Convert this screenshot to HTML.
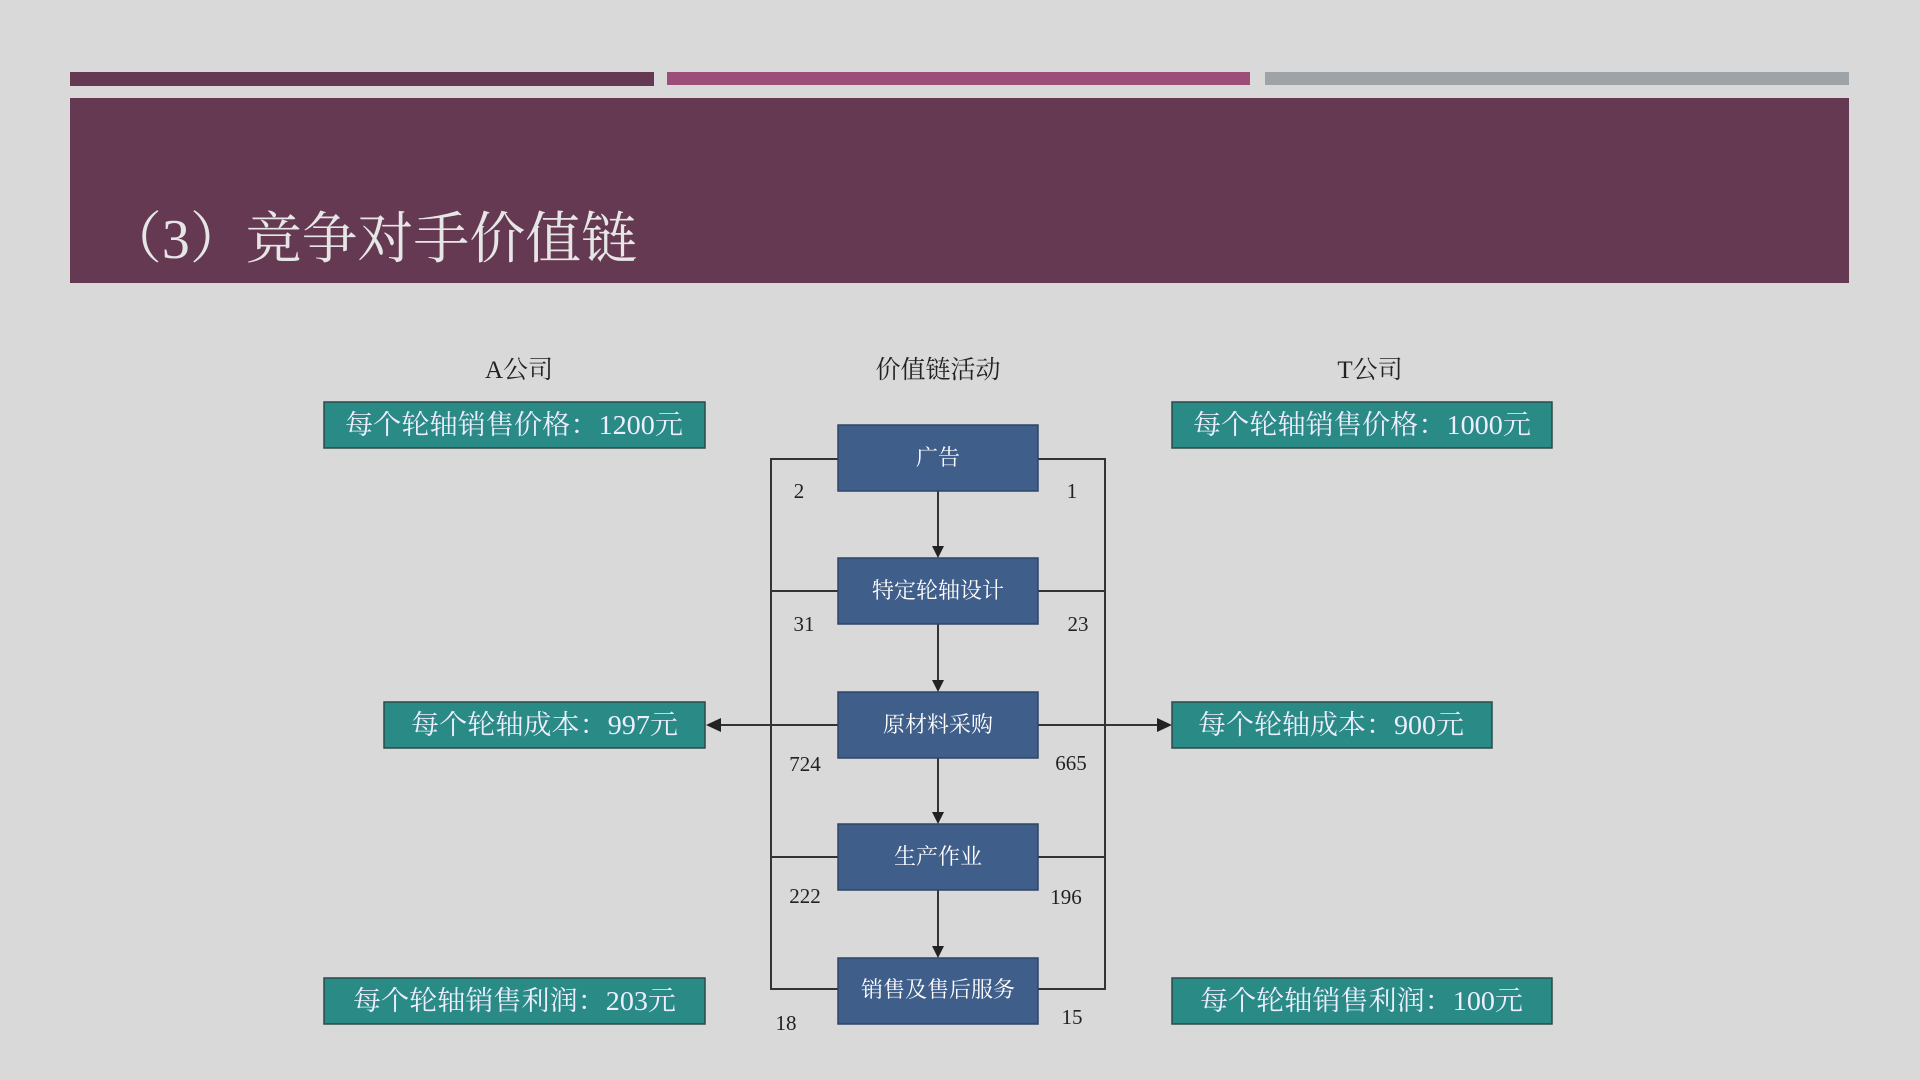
<!DOCTYPE html>
<html><head><meta charset="utf-8"><style>
html,body{margin:0;padding:0;background:#d9d9d9;width:1920px;height:1080px;overflow:hidden}
svg{display:block}
text{font-family:"Liberation Serif","Noto Serif CJK SC",serif}
</style></head><body>
<svg width="1920" height="1080" viewBox="0 0 1920 1080" xmlns="http://www.w3.org/2000/svg">
<rect width="1920" height="1080" fill="#d9d9d9"/>
<rect x="70" y="72" width="584" height="14" fill="#653951"/>
<rect x="667" y="72" width="583" height="13" fill="#9b4f78"/>
<rect x="1265" y="72" width="584" height="13" fill="#9ea3a8"/>
<rect x="70" y="98" width="1779" height="185" fill="#653951"/>
<text x="106" y="258" font-size="56" fill="#e6e6e6" textLength="531" lengthAdjust="spacingAndGlyphs" font-family="Liberation Serif,Noto Serif CJK SC,serif">（3）竞争对手价值链</text>

<g font-size="25" fill="#222" text-anchor="middle">
<text x="519" y="378">A公司</text>
<text x="938" y="378">价值链活动</text>
<text x="1370" y="378">T公司</text>
</g>

<g stroke="#333" stroke-width="2" fill="none">
<polyline points="838,459 771,459 771,989 838,989"/>
<polyline points="1038,459 1105,459 1105,989 1038,989"/>
<line x1="771" y1="591" x2="838" y2="591"/>
<line x1="771" y1="857" x2="838" y2="857"/>
<line x1="1038" y1="591" x2="1105" y2="591"/>
<line x1="1038" y1="857" x2="1105" y2="857"/>
<line x1="838" y1="725" x2="718" y2="725"/>
<line x1="1038" y1="725" x2="1160" y2="725"/>
<line x1="938" y1="491" x2="938" y2="548"/>
<line x1="938" y1="624" x2="938" y2="682"/>
<line x1="938" y1="758" x2="938" y2="814"/>
<line x1="938" y1="890" x2="938" y2="948"/>
</g>
<g fill="#222">
<polygon points="706,725 721,718 721,732"/>
<polygon points="1172,725 1157,718 1157,732"/>
<polygon points="938,558 932,546 944,546"/>
<polygon points="938,692 932,680 944,680"/>
<polygon points="938,824 932,812 944,812"/>
<polygon points="938,958 932,946 944,946"/>
</g>

<g fill="#3f5e8a" stroke="#2f4566" stroke-width="1.5">
<rect x="838" y="425" width="200" height="66"/>
<rect x="838" y="558" width="200" height="66"/>
<rect x="838" y="692" width="200" height="66"/>
<rect x="838" y="824" width="200" height="66"/>
<rect x="838" y="958" width="200" height="66"/>
</g>
<g font-size="22" fill="#fff" text-anchor="middle">
<text x="938" y="465">广告</text>
<text x="938" y="598">特定轮轴设计</text>
<text x="938" y="732">原材料采购</text>
<text x="938" y="864">生产作业</text>
<text x="938" y="997">销售及售后服务</text>
</g>

<g fill="#2a8a85" stroke="#2a4a48" stroke-width="1.5">
<rect x="324" y="402" width="381" height="46"/>
<rect x="384" y="702" width="321" height="46"/>
<rect x="324" y="978" width="381" height="46"/>
<rect x="1172" y="402" width="380" height="46"/>
<rect x="1172" y="702" width="320" height="46"/>
<rect x="1172" y="978" width="380" height="46"/>
</g>
<g font-size="27" fill="#eef">
<text x="345" y="434" textLength="338" lengthAdjust="spacingAndGlyphs">每个轮轴销售价格：1200元</text>
<text x="411" y="734" textLength="267" lengthAdjust="spacingAndGlyphs">每个轮轴成本：997元</text>
<text x="353" y="1010" textLength="323" lengthAdjust="spacingAndGlyphs">每个轮轴销售利润：203元</text>
<text x="1193" y="434" textLength="338" lengthAdjust="spacingAndGlyphs">每个轮轴销售价格：1000元</text>
<text x="1198" y="734" textLength="266" lengthAdjust="spacingAndGlyphs">每个轮轴成本：900元</text>
<text x="1200" y="1010" textLength="323" lengthAdjust="spacingAndGlyphs">每个轮轴销售利润：100元</text>
</g>

<g font-size="21" fill="#222" text-anchor="middle">
<text x="799" y="498">2</text>
<text x="804" y="631">31</text>
<text x="805" y="771">724</text>
<text x="805" y="903">222</text>
<text x="786" y="1030">18</text>
<text x="1072" y="498">1</text>
<text x="1078" y="631">23</text>
<text x="1071" y="770">665</text>
<text x="1066" y="904">196</text>
<text x="1072" y="1024">15</text>
</g>
</svg>
</body></html>
